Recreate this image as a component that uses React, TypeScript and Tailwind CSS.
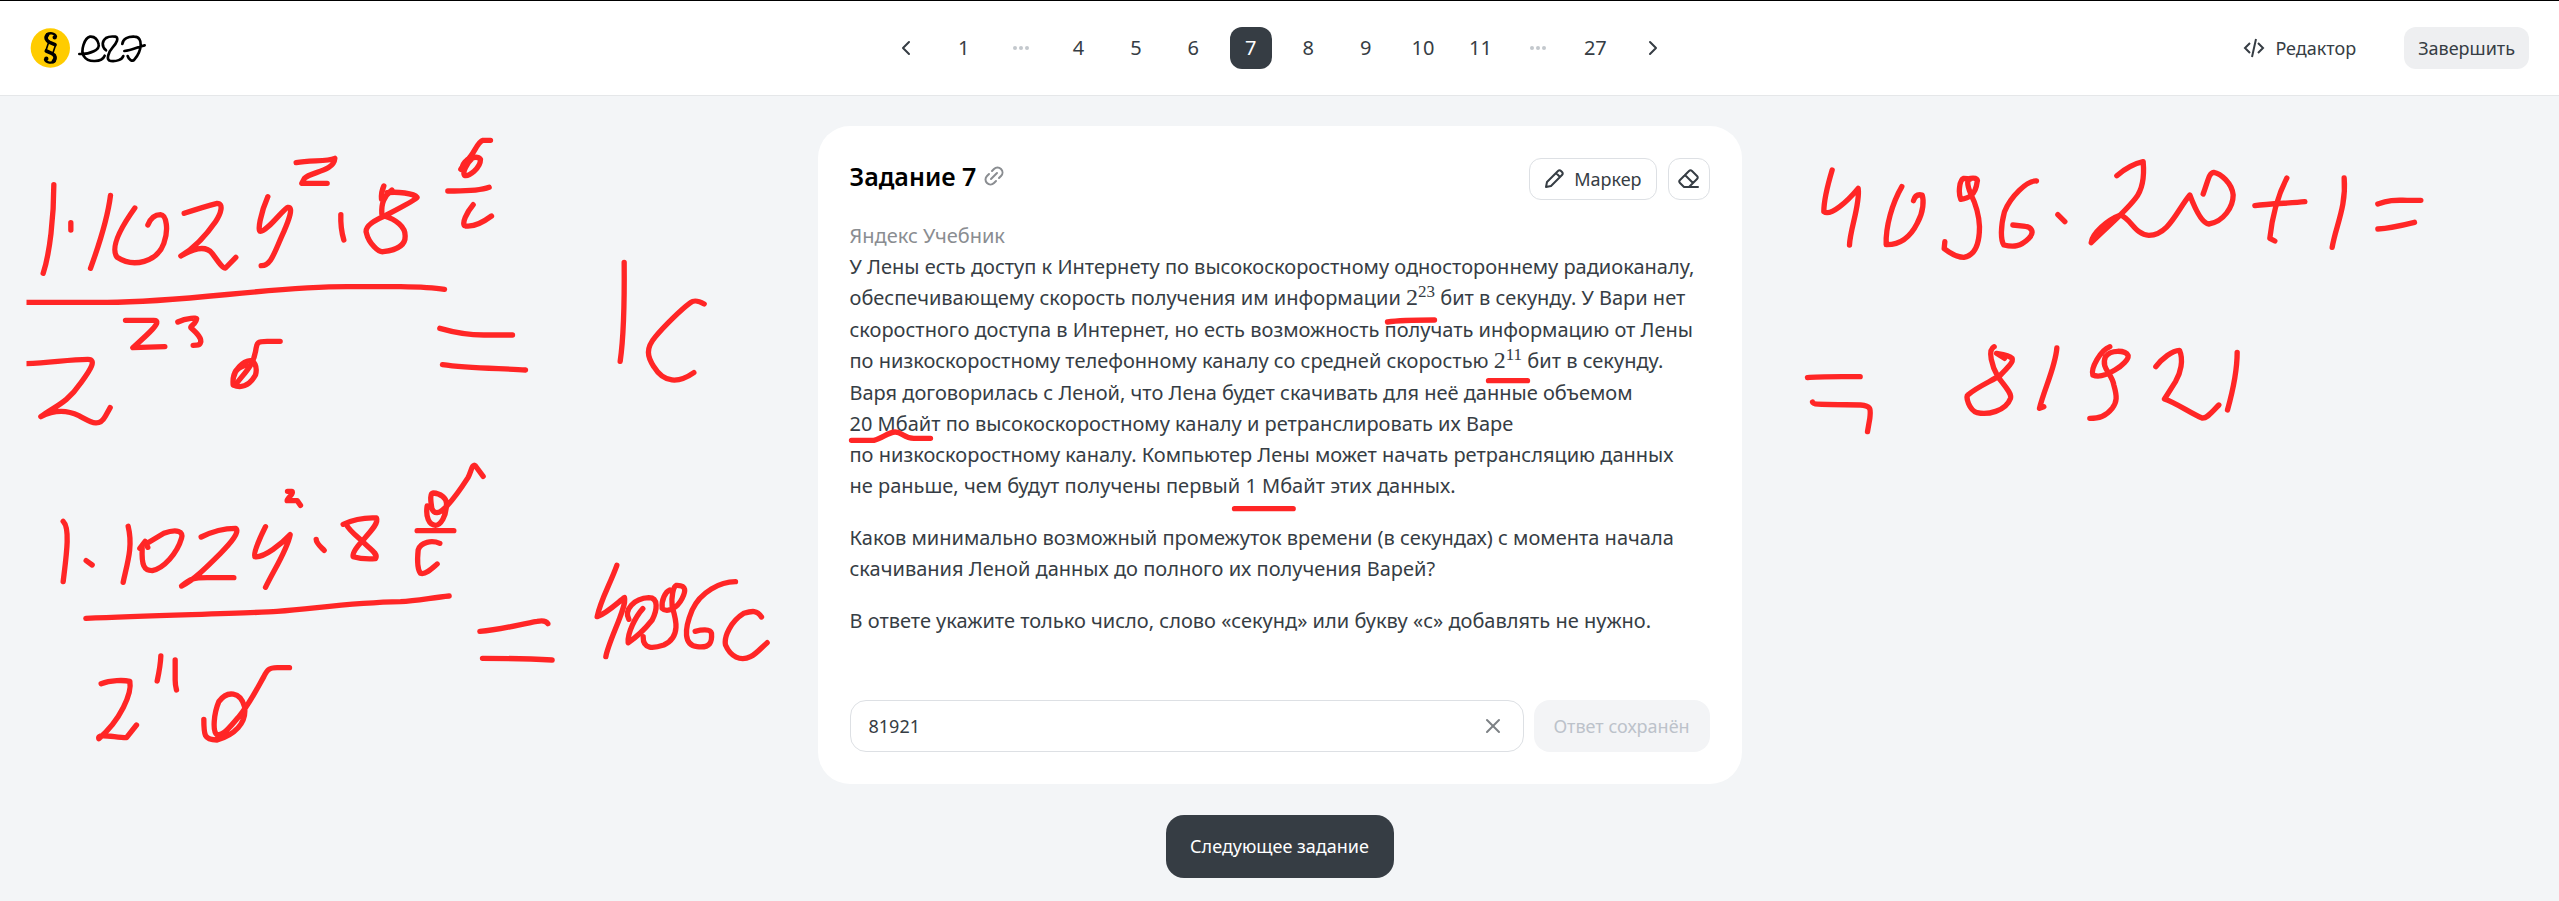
import React, { useState } from "react";
import { ChevronLeft, ChevronRight, X } from "lucide-react";

type PageItem = number | "gap-left" | "gap-right";

const pages: PageItem[] = [1, "gap-left", 4, 5, 6, 7, 8, 9, 10, 11, "gap-right", 27];

type StrokeGroup = { x: number; y: number; paths: string[] };

/* Marker strokes, stored at triple resolution relative to the origin of each group. */
const strokeGroups: StrokeGroup[] = [
  {
    x: 0,
    y: 110,
    paths: [
      "M160 224C160 320 148 430 128 490",
      "M211 338V360",
      "M330 256C322 320 290 420 270 475",
      "M403 294C370 340 325 410 350 442C400 475 470 455 490 400C505 360 498 315 480 314C465 314 450 325 442 345",
      "M551 310C590 297 630 285 650 280C670 280 662 310 645 335C610 385 580 415 541 438C580 415 615 405 635 430C650 450 665 475 675 474L706 442",
      "M802 260C780 310 770 365 780 364C800 364 850 295 862 292C880 290 865 330 850 365C820 430 812 468 782 467",
      "M887 158C930 150 980 155 1003 145C1000 185 930 185 912 205L904 220H980",
      "M1021 314C1020 340 1024 370 1030 390",
      "M1150 228C1142 245 1142 255 1143 268M1174 240C1150 260 1142 280 1144 312",
      "M1160 248C1190 244 1240 250 1250 262C1245 270 1190 298 1152 318C1120 332 1090 350 1098 370C1105 400 1135 428 1148 425C1190 420 1215 405 1214 378C1215 350 1185 328 1152 318",
      "M1470 91H1447C1430 95 1420 135 1400 150L1381 178",
      "M1386 170C1392 145 1430 135 1440 148C1440 175 1405 200 1392 196C1386 188 1396 162 1418 142",
      "M1342 243C1380 243 1430 245 1466 232",
      "M1418 284C1400 305 1380 345 1395 348C1420 352 1450 335 1473 318",
      "M40 577H320C560 577 800 530 1040 530H1200C1260 531 1300 533 1332 538",
      "M375 631H460C490 631 440 675 397 713L493 710",
      "M532 636C560 622 590 624 588 626C590 640 565 650 572 654C590 670 605 685 600 698C598 706 590 706 578 706",
      "M40 762C130 762 200 748 262 748C290 748 270 780 240 820C200 880 160 890 121 920C160 900 200 900 235 917C270 935 295 955 315 918L329 893",
      "M839 694H800C765 694 770 700 765 725C758 770 725 795 705 825",
      "M738 765C710 770 695 790 698 825C720 835 745 830 765 795C772 770 760 750 748 752C725 755 705 778 700 800",
    ],
  },
  {
    x: 400,
    y: 220,
    paths: [
      "M118 325C160 337 200 345 250 345H336",
      "M126 434C200 445 300 445 375 450",
      "M671 127C672 240 670 350 659 424",
      "M911 252C890 240 880 240 870 248C840 270 790 320 765 350C735 385 740 410 760 440C790 490 835 490 880 458",
      "M248 769L225 738C215 728 212 755 203 772C185 800 165 830 140 857C115 885 100 882 94 865C90 840 88 820 98 819C120 820 138 835 138 850C138 890 120 915 105 916C85 915 75 890 80 858",
      "M50 932H160",
      "M118 970C95 960 60 965 53 990C50 1020 52 1050 60 1060C75 1065 95 1045 110 1032",
      "M238 1234C300 1230 360 1212 410 1204C430 1200 438 1204 442 1211",
      "M246 1315C320 1315 400 1317 455 1320",
      "M649 1036C630 1090 600 1140 590 1190C620 1180 660 1140 672 1133C680 1160 625 1260 616 1310",
      "M685 1198C670 1170 700 1135 745 1133C775 1133 770 1170 755 1200C735 1225 710 1250 683 1268C680 1240 705 1190 727 1166",
      "M728 1250C727 1290 760 1285 790 1275C845 1250 824 1190 815 1160C812 1130 818 1100 828 1096C860 1095 855 1115 845 1135C830 1165 800 1180 785 1165C782 1140 795 1115 808 1110",
      "M1005 1085C960 1085 900 1115 875 1170C850 1230 850 1275 890 1280C930 1285 935 1265 933 1240C930 1225 900 1230 884 1234",
      "M1083 1191C1070 1170 1055 1172 1030 1180C990 1205 970 1250 975 1275C990 1310 1020 1325 1050 1310C1070 1300 1080 1285 1100 1268",
    ],
  },
  {
    x: 0,
    y: 440,
    paths: [
      "M188 244C210 265 197 350 188 425",
      "M257 362L275 375",
      "M383 259C398 320 380 370 368 427",
      "M418 325L434 304L442 322M440 310L490 280C530 265 550 275 543 295C530 340 490 385 455 392C430 392 423 375 425 325",
      "M602 291C640 272 680 265 705 265C720 275 690 310 660 340C620 380 580 420 543 438C570 415 580 413 620 413H700",
      "M795 260C780 290 755 345 763 350C790 355 845 310 869 284C860 330 820 390 795 442",
      "M861 154H875C880 165 860 172 860 182L890 182L900 196",
      "M947 298C947 310 960 320 971 331",
      "M1028 253C1060 238 1090 232 1128 234C1135 250 1110 275 1085 303C1065 325 1055 340 1058 350C1080 357 1110 357 1125 356C1135 340 1105 325 1085 303C1065 285 1050 275 1038 255",
      "M256 535C500 525 750 520 830 514C950 505 1050 488 1200 485C1250 482 1300 472 1346 468",
      "M302 731C330 720 370 720 388 724C395 760 360 840 295 896C290 880 330 890 378 893L408 855",
      "M481 648C480 675 475 700 470 723",
      "M524 660V720Q524 735 528 750",
      "M867 683H830C805 683 800 690 790 710C765 755 745 795 715 830C690 860 670 885 650 885C635 875 640 820 655 785C680 750 720 755 732 800C740 850 700 885 650 900C610 900 610 885 610 838",
    ],
  },
  {
    x: 1780,
    y: 130,
    paths: [
      "M155 120C140 170 130 220 130 245C150 260 200 215 233 175C240 220 208 300 207 345",
      "M364 170C335 220 315 290 317 344C370 345 395 310 410 280C430 245 430 210 425 195C410 192 402 200 399 212",
      "M493 335L491 356Q525 382 550 382C590 375 597 330 597 290C595 240 580 210 570 190C558 160 560 148 570 145C590 142 592 150 590 155C585 200 560 205 541 208C533 190 536 150 550 145L570 147",
      "M768 153C740 150 690 200 672 245C660 290 660 330 670 345C700 352 720 350 745 325C765 305 750 290 735 289L697 285",
      "M832 254L853 275",
      "M81 743C110 739 150 740 239 740",
      "M96 816C98 824 110 823 240 825C275 828 270 840 268 865L261 905",
      "M641 650C620 660 635 710 652 740C670 765 695 790 690 805C675 845 620 855 590 848C565 840 555 800 562 795C590 770 640 750 660 735C680 715 700 695 695 685C685 675 660 672 648 670L672 685",
      "M829 654C825 710 790 780 777 835L790 830",
    ],
  },
  {
    x: 2080,
    y: 130,
    paths: [
      "M109 137C135 115 165 100 188 95C192 140 185 180 165 205C130 250 80 290 32 338C35 310 80 270 120 255C150 265 165 315 205 316C265 315 290 240 328 195C345 240 365 280 385 282C430 275 458 230 458 195C455 160 420 130 400 127C385 130 385 145 368 192",
      "M100 266L36 330L62 300L90 276L50 314",
      "M619 144C590 200 575 260 568 325L583 333",
      "M523 227C570 220 630 220 673 215",
      "M791 144C798 230 765 290 755 352",
      "M892 222C930 208 950 211 980 211H1021",
      "M892 297C930 295 970 285 1002 277",
      "M88 650C60 660 30 715 37 735C70 750 145 700 143 677C135 660 90 658 75 680C60 715 95 730 100 765C110 800 110 815 95 835C75 860 55 865 28 865",
      "M226 710C245 685 275 662 297 661C310 690 300 730 285 755L252 807C290 820 330 850 365 864C380 865 390 850 415 825",
      "M470 667C470 730 455 790 441 840",
    ],
  },
  {
    x: 800,
    y: 300,
    paths: [
      "M1761 66C1800 60 1850 60 1902 60",
      "M2064 242H2181",
      "M153 421H220C245 415 265 396 284 396C305 396 310 415 340 415H390",
      "M1302 626H1478",
    ],
  },
];

function MarkerLayer() {
  return (
    <svg
      className="pointer-events-none absolute top-0 left-1/2 h-[901px] w-[2559px] -translate-x-1/2"
      viewBox="0 0 2559 901"
      fill="none"
      stroke="#ff2626"
      strokeWidth="16"
      strokeLinecap="round"
      strokeLinejoin="round"
      aria-hidden="true"
    >
      <defs>
        <clipPath id="board">
          <rect x="26" y="96" width="2507" height="805" />
        </clipPath>
      </defs>
      <g clipPath="url(#board)">
        {strokeGroups.map((group, i) => (
          <g key={i} transform={`translate(${group.x} ${group.y}) scale(${1 / 3})`}>
            {group.paths.map((d) => (
              <path key={d} d={d} />
            ))}
          </g>
        ))}
      </g>
    </svg>
  );
}

function Logo() {
  return (
    <a href="#" aria-label="ЕГЭ" className="block">
      <svg width="120" height="42" viewBox="90 80 360 126" fill="none" strokeLinecap="round" strokeLinejoin="round">
        <circle cx="151" cy="143" r="59" fill="#ffcc00" />
        <g stroke="#000">
          <path strokeWidth="7" d="M168 108C164 97 149 97 141 102M135 178C139 189 156 189 164 183" />
          <path strokeWidth="11" d="M143 103C134 112 139 121 149 126L165 133M160 183C169 174 166 164 155 159L139 152" />
          <path strokeWidth="5" d="M146 126L138 150M166 136L158 160" />
          <circle cx="164" cy="111" r="4" fill="#000" strokeWidth="5" />
          <circle cx="139" cy="175" r="4" fill="#000" strokeWidth="5" />
          <path
            strokeWidth="8"
            d="M238 161C272 162 300 148 296 132C292 114 282 108 270 109C254 112 240 152 252 168C264 188 306 186 314 166"
          />
          <path
            strokeWidth="8"
            d="M318 150C304 138 306 122 318 113C326 108 338 108 346 109C358 112 350 128 338 141C326 154 316 181 332 182C350 184 366 178 370 167"
          />
          <path strokeWidth="8" d="M367 131C368 114 386 108 403 109C432 110 425 153 403 178C397 186 386 177 383 167M373 152C396 151 414 139 434 135" />
        </g>
      </svg>
    </a>
  );
}

function Dots() {
  return (
    <svg width="18" height="6" viewBox="0 0 18 6" fill="#c3c8cd" aria-hidden="true">
      <circle cx="3" cy="3" r="2" />
      <circle cx="9" cy="3" r="2" />
      <circle cx="15" cy="3" r="2" />
    </svg>
  );
}

function CodeIcon() {
  return (
    <svg width="22" height="20" viewBox="0 0 22 20" fill="none" stroke="currentColor" strokeWidth="2" strokeLinejoin="miter" aria-hidden="true">
      <path d="M7 5L2 10L7 15M15 5L20 10L15 15M13 1L9 19" />
    </svg>
  );
}

function LinkIcon() {
  return (
    <svg width="20" height="20" viewBox="0 0 20 20" fill="none" stroke="currentColor" strokeWidth="2" strokeLinecap="round" aria-hidden="true">
      <path d="M7 13L13 7M8 5L10 3C12 1 15 1 17 3C19 5 19 8 17 10L15 12M5 8L3 10C1 12 1 15 3 17C5 19 8 19 10 17L12 15" />
    </svg>
  );
}

function PencilIcon() {
  return (
    <svg width="20" height="20" viewBox="0 0 20 20" fill="none" stroke="currentColor" strokeWidth="2" strokeLinejoin="round" aria-hidden="true">
      <path d="M2 18L3 13L14 2C15 1 16 1 17 2L18 3C19 4 19 5 18 6L7 17ZM12 4L16 8" />
    </svg>
  );
}

function EraserIcon() {
  return (
    <svg width="22" height="20" viewBox="0 0 22 20" fill="none" stroke="currentColor" strokeWidth="2" strokeLinejoin="round" strokeLinecap="round" aria-hidden="true">
      <path d="M6 18L2 14C1 13 1 12 2 11L11 2C12 1 13 1 14 2L19 7C20 8 20 9 19 10L11 18M20 18H6M7 6L15 14" />
    </svg>
  );
}

function Power({ base, exponent }: { base: string; exponent: string }) {
  return (
    <span className="inline-block h-8 font-['Liberation_Serif',serif] text-[24px]">
      {base}
      <sup className="-top-2 text-[17px]">{exponent}</sup>
    </span>
  );
}

export default function App() {
  const [answer, setAnswer] = useState("81921");

  return (
    <div className="relative min-h-screen overflow-hidden bg-[#f3f5f7] font-['Noto_Sans',sans-serif] text-[#363d44]">
      <header className="grid h-24 grid-cols-[1fr_auto_1fr] items-center border-t border-b border-t-black border-b-[#e5e7e9] bg-white px-[30px]">
        <Logo />
        <nav aria-label="Задания" className="grid w-[804px] grid-cols-14 justify-items-center text-[20px]">
          <button aria-label="Назад" className="flex size-[42px] items-center justify-center">
            <ChevronLeft size={24} strokeWidth={2} />
          </button>
          {pages.map((page) =>
            typeof page === "number" ? (
              <button
                key={page}
                className={
                  page === 7
                    ? "size-[42px] rounded-xl bg-[#363d44] text-white"
                    : "size-[42px] rounded-xl"
                }
              >
                {page}
              </button>
            ) : (
              <span key={page} className="flex size-[42px] items-center justify-center">
                <Dots />
              </span>
            ),
          )}
          <button aria-label="Вперёд" className="flex size-[42px] items-center justify-center">
            <ChevronRight size={24} strokeWidth={2} />
          </button>
        </nav>
        <div className="flex items-center justify-end gap-12 text-[18px]">
          <button className="flex items-center gap-2.5">
            <CodeIcon />
            Редактор
          </button>
          <button className="h-[42px] rounded-xl bg-[#eeeff1] px-3.5">Завершить</button>
        </div>
      </header>

      <main className="flex flex-col items-center pt-[30px] pb-[22px]">
        <section className="w-[924px] max-w-full rounded-[32px] bg-white p-8">
          <div className="flex items-start justify-between">
            <h1 className="flex items-center gap-2 text-[25px] leading-9 font-semibold text-black">
              Задание 7
              <a href="#" aria-label="Ссылка на задание" className="text-[#8a8d91]">
                <LinkIcon />
              </a>
            </h1>
            <div className="flex gap-[11px] text-[18px]">
              <button className="flex h-[42px] items-center gap-2.5 rounded-xl border border-[#dde0e4] px-3.5">
                <PencilIcon />
                Маркер
              </button>
              <button aria-label="Ластик" className="flex size-[42px] items-center justify-center rounded-xl border border-[#dde0e4]">
                <EraserIcon />
              </button>
            </div>
          </div>

          <div className="mt-5 text-[20px] leading-[31px] whitespace-nowrap">
            <p className="text-[#8a8d91]">Яндекс Учебник</p>
            <p>
              У Лены есть доступ к Интернету по высокоскоростному одностороннему радиоканалу,
              <br />
              обеспечивающему скорость получения им информации <Power base="2" exponent="23" /> бит в секунду. У Вари нет
              <br />
              скоростного доступа в Интернет, но есть возможность получать информацию от Лены
              <br />
              по низкоскоростному телефонному каналу со средней скоростью <Power base="2" exponent="11" /> бит в секунду.
              <br />
              Варя договорилась с Леной, что Лена будет скачивать для неё данные объемом
              <br />
              20 Мбайт по высокоскоростному каналу и ретранслировать их Варе
              <br />
              по низкоскоростному каналу. Компьютер Лены может начать ретрансляцию данных
              <br />
              не раньше, чем будут получены первый 1 Мбайт этих данных.
            </p>
            <p className="mt-[21px]">
              Каков минимально возможный промежуток времени (в секундах) с момента начала
              <br />
              скачивания Леной данных до полного их получения Варей?
            </p>
            <p className="mt-[21px]">В ответе укажите только число, слово «секунд» или букву «с» добавлять не нужно.</p>
          </div>

          <form className="mt-16 flex gap-[10px] text-[18px]" onSubmit={(e) => e.preventDefault()}>
            <div className="flex h-[52px] grow items-center rounded-2xl border border-[#dde0e4] pr-[18px] pl-[18px]">
              <input
                aria-label="Ответ"
                className="min-w-0 grow outline-none"
                value={answer}
                onChange={(e) => setAnswer(e.target.value)}
              />
              <button type="button" aria-label="Очистить" className="text-[#7d8185]" onClick={() => setAnswer("")}>
                <X size={24} strokeWidth={2} />
              </button>
            </div>
            <button disabled className="h-[52px] w-[176px] rounded-2xl bg-[#f3f4f6] text-[#bcc2ca]">
              Ответ сохранён
            </button>
          </form>
        </section>
        <button className="mt-[31px] h-[63px] w-[228px] rounded-[18px] bg-[#363d44] text-[18px] text-white">
          Следующее задание
        </button>
      </main>
      <MarkerLayer />
    </div>
  );
}
